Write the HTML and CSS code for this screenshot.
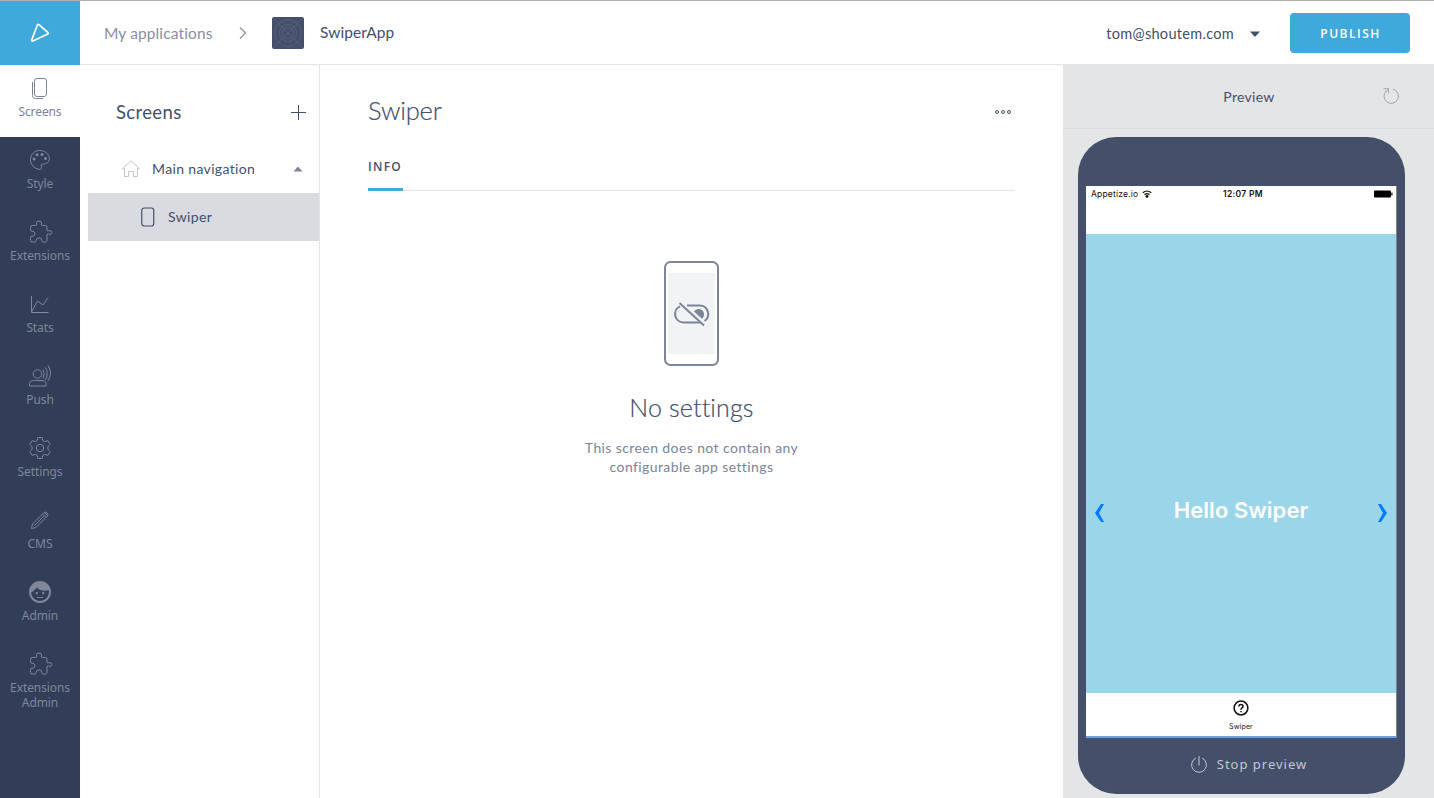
FILE: index.html
```html
<!DOCTYPE html>
<html lang="en">
<head>
<meta charset="utf-8">
<title>SwiperApp</title>
<link rel="stylesheet" href="styles.css">
</head>
<body>
<svg width="0" height="0" class="defs">
  <symbol id="puzzle" viewBox="0 0 24 24"><path d="M1.500 7.500Q1.500 5.500 3.500 5.500H6.500Q8.300 5.500 7.500 3.800Q7 1 10 1Q13 1 12.500 3.800Q11.700 5.500 13.500 5.500H16.500Q18 5.500 18 7.500V10Q18 11.500 19.500 10.800Q22.800 9.800 22.800 12.500Q22.800 15.300 19.500 14.200Q18 13.500 18 15V20.500Q18 22 16.500 22H14Q12.800 22 12.800 20.500Q12.800 17.800 10 17.800Q7.200 17.800 7.200 20.500Q7.200 22 6 22H3Q1.500 22 1.500 20.500V17.500Q1.500 16.300 3 16.300Q5.800 16.300 5.800 13.700Q5.800 11.200 3 11.200Q1.500 11.200 1.500 10Z"/></symbol>
</svg>
<div class="app">
  <nav class="sidebar">
    <a class="logo"><svg width="20" height="20" viewBox="0 0 20 20"><path d="M7.500 1.700Q8.200.9 9 1.700L18 9.600Q18.700 10.400 17.800 10.900L2.900 17.900Q1.500 18.300 1.700 17Z"/></svg></a>
    <a class="item active"><svg width="24" height="24" viewBox="0 0 24 24"><rect x="6.500" y="2.500" width="12" height="18" rx="2.500"/><path d="M4.500 6V19.500Q4.500 22.500 7.500 22.500H15"/></svg><span>Screens</span></a>
    <a class="item"><svg width="24" height="24" viewBox="0 0 24 24"><path d="M11.500 2.500C17 2.500 21.300 6 21.300 10.500C21.300 14 18.500 16.200 15.500 16C13 16 12.800 17.500 13.500 19.500C13.800 21 12.500 21.500 11 21.300C6 20.500 2.500 16.500 2.500 11.500C2.500 6.500 6.500 2.500 11.500 2.500Z"/><g class="solid"><circle cx="6" cy="11" r="1.500"/><circle cx="9" cy="6.800" r="1.500"/><circle cx="14" cy="6.500" r="1.500"/><circle cx="17.500" cy="10.500" r="1.500"/></g></svg><span>Style</span></a>
    <a class="item"><svg class="piece" width="24" height="24"><use href="#puzzle"/></svg><span>Extensions</span></a>
    <a class="item"><svg width="24" height="24" viewBox="0 0 24 24"><path d="M3.500 4V20.500H20.500M3.500 20L9.500 9L15 13L20 5.500"/></svg><span>Stats</span></a>
    <a class="item"><svg width="24" height="24" viewBox="0 0 24 24"><circle cx="9.500" cy="10" r="4.300"/><path d="M1.500 22V19.500Q1.500 16.500 6.500 16.500H13Q18 16.500 18 19.500V22ZM15 5.500Q17.500 10 15 14.500M17.500 3.500Q21 9.500 17.500 16M20 1.500Q25 9 20 17"/></svg><span>Push</span></a>
    <a class="item"><svg width="24" height="24" viewBox="0 0 24 24"><circle cx="12" cy="12" r="3.700"/><path stroke-linejoin="round" d="M9.800 1.500H14.200L14.700 4Q15 5 16.200 5.500Q17 5.800 18 5.300L19.800 4.600L22.200 8.300L20.500 10Q19.800 11 19.800 12Q19.800 13 20.500 14L22.200 15.700L19.800 19.400L18 18.700Q17 18.200 16.200 18.500Q15 19 14.700 20L14.200 22.500H9.800L9.300 20Q9 19 7.800 18.500Q7 18.200 6 18.700L4.200 19.400L1.800 15.700L3.500 14Q4.200 13 4.200 12Q4.200 11 3.500 10L1.800 8.300L4.200 4.600L6 5.300Q7 5.800 7.800 5.500Q9 5 9.300 4Z"/></svg><span>Settings</span></a>
    <a class="item"><svg width="24" height="24" viewBox="0 0 24 24"><path d="M3.500 20.500L4.500 16L16 4.500Q17.500 3.500 19 5Q20.500 6.500 19.500 8L8 19.500ZM14.500 6L18 9.500M16.300 4.500L19.500 7.700M6.500 17.500L16 8"/></svg><span>CMS</span></a>
    <a class="item"><svg width="24" height="24" viewBox="0 0 24 24"><circle class="ring" cx="12" cy="12" r="10"/><path class="solid" d="M2 13C4.500 12 7.500 10 8.700 7.500C12 11 17 11.500 21.500 10C20.500 4 16 2 12 2C6 2 2 6 2 13Z"/><g class="solid"><circle cx="8.800" cy="13" r="1.200"/><circle cx="15.200" cy="13" r="1.200"/></g><path d="M9 17Q12 18.800 15 17"/></svg><span>Admin</span></a>
    <a class="item"><svg class="piece" width="24" height="24"><use href="#puzzle"/></svg><span>Extensions<br>Admin</span></a>
  </nav>
  <div class="main">
    <header class="topbar">
      <span class="crumb">My applications</span>
      <svg class="chev" width="8" height="14" viewBox="0 0 8 14"><path d="M1 1.500L6.500 7L1 12.500"/></svg>
      <svg class="appicon" width="32" height="32" viewBox="0 0 32 32"><rect width="32" height="32" rx="2"/><path d="M1 1L31 31M31 1L1 31"/><circle cx="16" cy="16" r="13.500"/><circle cx="16" cy="16" r="8.500"/><circle cx="16" cy="16" r="5.500"/></svg>
      <span class="appname">SwiperApp</span>
      <span class="user">tom@shoutem.com</span>
      <svg class="caret" width="10" height="6" viewBox="0 0 10 6"><path d="M0 .5H10L5.500 5.500H4.500Z"/></svg>
      <button class="publish">PUBLISH</button>
    </header>
    <div class="columns">
      <aside class="screens">
        <div class="screens-head"><h2>Screens</h2><svg width="16" height="16" viewBox="0 0 16 16"><path d="M8.500 0V15M1 7.500H16"/></svg></div>
        <div class="nav-row"><svg class="home" width="18" height="18" viewBox="0 0 18 18"><path d="M.7 8.500L9 .7L17.300 8.500H15.500V16.500H11.500V11.500H6.500V16.500H2.500V8.500Z"/></svg><span>Main navigation</span><svg class="up" width="10" height="6" viewBox="0 0 10 6"><path d="M.5 5.500H9.500L5.500 1H4.500Z"/></svg></div>
        <div class="nav-row selected"><svg width="14" height="20" viewBox="0 0 14 20"><rect x=".75" y="1" width="12" height="18" rx="2.500"/></svg><span>Swiper</span></div>
      </aside>
      <main class="content">
        <div class="title-row"><h1>Swiper</h1><svg width="18" height="6" viewBox="0 0 18 6"><circle cx="3" cy="3" r="1.500"/><circle cx="9" cy="3" r="1.500"/><circle cx="15" cy="3" r="1.500"/></svg></div>
        <div class="tabs"><span class="tab">INFO</span></div>
        <div class="empty">
          <svg width="55" height="105" viewBox="0 0 55 105"><rect class="frame" x="1" y="1" width="53" height="103" rx="5.500"/><rect class="pane" x="4" y="12" width="47" height="81"/><path class="pill" d="M23 44.500H35.500A8.500 8.500 0 0 1 40.500 60M36.500 61.500H19.500A8.500 8.500 0 0 1 16 45.300"/><path class="knob" d="M30 50.500C32 47.500 36 47 38.500 49.500C40.800 52 40.500 55.500 38 57.800Z"/><path class="pill" d="M15.500 42L40 64.500"/></svg>
          <h3>No settings</h3>
          <p>This screen does not contain any<br>configurable app settings</p>
        </div>
      </main>
      <section class="preview">
        <div class="preview-head"><span>Preview</span><svg width="18" height="18" viewBox="0 0 18 18"><path d="M4.500 3.700A7.200 7.200 0 1 0 11 2.200M1.500 1.700H6.500V6.500M6.300 2L3.500 5"/></svg></div>
        <div class="device">
          <div class="screen">
            <div class="status"><span class="carrier">Appetize.io</span><svg class="wifi" width="10" height="8" viewBox="0 0 10 8"><path d="M.8 2.800Q5-.8 9.200 2.800M2.500 4.700Q5 2.700 7.500 4.700"/><circle cx="5" cy="6.300" r="1.100"/></svg><span class="clock">12:07 PM</span><svg class="battery" width="19" height="8" viewBox="0 0 19 8"><rect x="0" y=".5" width="17" height="7" rx="1"/><rect x="17.300" y="2.500" width="1.200" height="3" rx=".5"/></svg></div>
            <div class="slide">
              <svg width="9" height="18" viewBox="0 0 9 18"><path d="M6 0H9L4 9L9 18H6L0 9Z"/></svg>
              <b>Hello Swiper</b>
              <svg width="9" height="18" viewBox="0 0 9 18"><path d="M3 0H0L5 9L0 18H3L9 9Z"/></svg>
            </div>
            <div class="tabbar"><svg width="16" height="16" viewBox="0 0 16 16"><circle cx="8" cy="8" r="6.900"/><path d="M5.900 6.500Q5.900 4.400 8 4.400Q10.100 4.400 10.100 6.300Q10.100 7.200 9 7.900Q8 8.500 8 9.800M8 10.900V12.200"/></svg><span>Swiper</span></div>
          </div>
          <div class="stop"><svg width="18" height="18" viewBox="0 0 18 18"><path d="M5.800 2.200A7.400 7.400 0 1 0 12.200 2.200M9 0V9.500"/></svg><span>Stop preview</span></div>
        </div>
      </section>
    </div>
  </div>
</div>
</body>
</html>
```

FILE: styles.css
```css
* { box-sizing: border-box; }
body { margin: 0; font-family: Lato, "Open Sans", sans-serif; color: #444f6c; background: #fff; }
h1, h2, h3, p { margin: 0; }
svg { display: block; flex: none; fill: none; stroke: currentColor; }
.defs { position: absolute; }
.app { display: flex; width: 1434px; height: 798px; overflow: hidden; border-top: 1px solid #b0b0b0; }

.sidebar { width: 80px; flex: none; background: #323d58; }
.logo { display: flex; height: 64px; align-items: center; justify-content: center; background: #3fa9dc; color: #fff; }
.logo svg { stroke-width: 1.7; stroke-linejoin: round; }
.item { display: flex; flex-direction: column; align-items: center; height: 72px; padding-top: 11px; gap: 4px; color: #7f8799; font: 12px/15px "Noto Sans", sans-serif; letter-spacing: -.1px; text-align: center; }
.item.active { background: #fff; color: #7b8499; }
.item .piece { margin-left: 2px; }
.solid { fill: currentColor; stroke: none; }
.ring { stroke-width: 2; }

.main { flex: 1; display: flex; flex-direction: column; min-width: 0; }
.topbar { display: flex; align-items: center; height: 64px; padding: 0 24px; border-bottom: 1px solid #e4e5e7; }
.crumb { width: 135px; font-size: 15.500px; color: #888fa1; letter-spacing: .12px; padding-top: 1px; }
.chev { color: #888fa1; stroke-width: 1.200; margin-right: 25px; }
.appicon rect { fill: #444f6c; stroke: none; }
.appicon { stroke: #5a6480; stroke-width: .8; margin-right: 16px; }
.appname { font-size: 15.500px; letter-spacing: .08px; padding-bottom: 1px; }
.user { margin-left: auto; font-size: 14.500px; letter-spacing: .3px; padding-top: 2px; }
.caret { margin: 3px 30px 0 16px; fill: currentColor; stroke: none; }
.publish { width: 120px; height: 40px; padding: 1px 0 0 1px; border: 0; border-radius: 4px; background: #3fa9dc; color: #fff; font: 600 12px "Open Sans", sans-serif; letter-spacing: 1.500px; }

.columns { flex: 1; display: flex; min-height: 0; }
.screens { width: 240px; flex: none; padding-left: 8px; border-right: 1px solid #e4e5e7; }
.screens-head { display: flex; align-items: center; justify-content: space-between; height: 80px; padding: 16px 13px 0 28px; }
.screens-head h2 { font-size: 18.500px; font-weight: 400; letter-spacing: .35px; padding-bottom: 2px; }
.nav-row { display: flex; align-items: center; height: 48px; padding: 0 16px 0 34px; font-size: 14px; }
.nav-row span { margin-left: 12px; padding-bottom: 2px; letter-spacing: .35px; }
.home { color: #c0c4cf; }
.up { margin-left: auto; fill: #7b8499; stroke: none; }
.selected { background: #dadbe0; padding-left: 53px; }
.selected svg { stroke-width: 1.200; }
.selected span { margin-left: 13px; }

.content { flex: 1; padding: 24px 48px 0; }
.title-row { display: flex; justify-content: space-between; align-items: center; height: 44px; padding-right: 3px; }
.title-row h1 { font-size: 25.500px; font-weight: 300; padding-bottom: 2px; letter-spacing: -.2px; -webkit-text-stroke: .2px; }
.title-row svg { margin-top: 2px; }
.tabs { display: flex; margin-top: 18px; height: 40px; border-bottom: 1px solid #e4e5e7; }
.tab { height: 40px; width: 35px; padding-top: 8px; border-bottom: 3px solid #3fa9dc; font: 600 12px/16px "Open Sans", sans-serif; letter-spacing: 1.300px; }
.empty { display: flex; flex-direction: column; align-items: center; padding-top: 70px; color: #7b8499; }
.frame, .pill { stroke: #7b8499; stroke-width: 2; }
.pane { fill: #f2f3f5; stroke: none; }
.knob { fill: #7b8499; stroke: none; }
.empty h3 { margin-top: 25px; font-size: 25px; line-height: 32px; font-weight: 300; color: #444f6c; letter-spacing: .15px; -webkit-text-stroke: .2px; }
.empty p { margin-top: 15px; text-align: center; font-size: 14px; line-height: 19px; letter-spacing: .4px; }

.preview { width: 371px; flex: none; margin-top: -1px; background: #e4e5e7; }
.preview-head { display: grid; grid-template-columns: 1fr auto 1fr; align-items: center; height: 65px; border-bottom: 1px solid #d9dadd; font-size: 14px; letter-spacing: .3px; }
.preview-head span { grid-column: 2; margin-left: 1px; }
.preview-head svg { color: #a0a6b5; justify-self: end; margin-right: 34px; }
.device { margin: 8px 0 0 15px; width: 327px; height: 657px; padding: 49px 8px 0; border-radius: 38px; background: #444f6a; }
.screen { width: 311px; height: 552px; background: #fff; border-right: 1px solid #7c8494; border-bottom: 2px solid #6f9fe0; font-family: Inter, sans-serif; color: #111; }
.status { display: grid; grid-template-columns: 51px 81px auto 1fr; height: 48px; padding: 3px 3px 0 5px; font-size: 8.500px; line-height: 11px; }
.carrier { white-space: nowrap; letter-spacing: .18px; }
.wifi { fill: #111; margin-top: 1px; }
.wifi path { fill: none; stroke-width: 1.200; }
.clock { font-weight: 600; letter-spacing: .3px; white-space: nowrap; }
.battery { fill: #000; stroke: none; justify-self: end; margin-top: 1px; }
.slide { display: flex; align-items: center; justify-content: space-between; height: 459px; padding: 98px 9px 0; background: #9bd5e9; color: #fff; }
.slide svg { fill: #007aff; stroke: none; }
.slide b { font-size: 22px; line-height: 28px; font-weight: 600; margin-top: -6px; letter-spacing: .05px; }
.tabbar { display: flex; flex-direction: column; align-items: center; padding-top: 7px; gap: 6px; font-size: 7px; line-height: 10px; letter-spacing: .15px; }
.tabbar svg { stroke-width: 1.500; }
.stop { display: flex; align-items: center; justify-content: center; gap: 9px; height: 53px; padding-left: 14px; color: #c3c7d1; font: 13px/18px "Noto Sans", sans-serif; letter-spacing: 1px; }
.stop span { margin-top: -1px; }
```
